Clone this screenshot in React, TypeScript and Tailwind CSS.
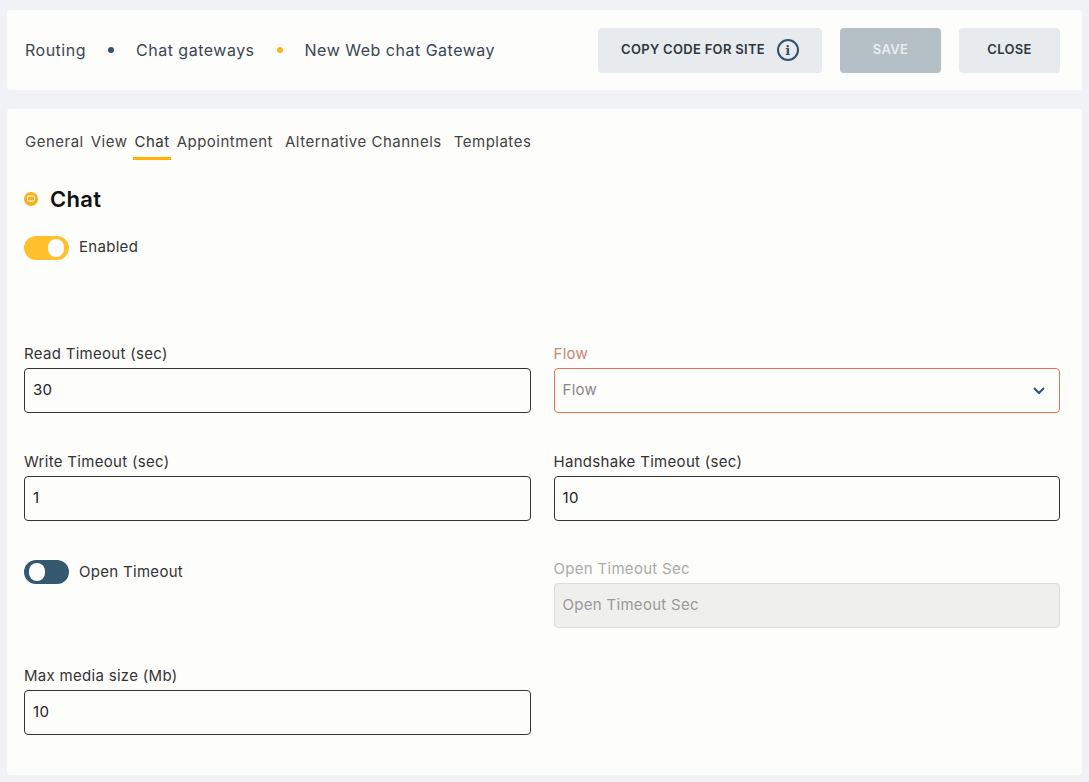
import React from "react";

function Field({ label, value, labelCls = "text-[#333]", boxCls = "border-[#333] text-[#222]", children }: any) {
  return (
    <div className="flex flex-col">
      <div className={`text-[15px] leading-[18px] mb-[5px] ${labelCls}`}>{label}</div>
      <div className={`h-[45px] border rounded-[4px] px-[8px] flex items-center text-[15px] ${boxCls}`}>
        {value}
        {children}
      </div>
    </div>
  );
}

export default function App() {
  return (
    <div className="w-[1089px] h-[782px] bg-[#f1f2f5] px-[7px] pt-[10px] text-[#333] tracking-[0.3px]" style={{ fontFamily: "Inter, 'Noto Sans', sans-serif" }}>
      <div className="h-[80px] bg-[#fdfdfc] rounded-[4px] flex items-center pl-[18px] pr-[22px]">
        <div className="flex items-center text-[16px] text-[#3a4654] flex-1 tracking-[0.5px]">
          <span>Routing</span>
          <span className="w-[6px] h-[6px] rounded-full bg-[#34506a] mx-[22px]" />
          <span>Chat gateways</span>
          <span className="w-[6px] h-[6px] rounded-full bg-[#fbb615] mx-[22px]" />
          <span>New Web chat Gateway</span>
        </div>
        <button className="h-[45px] w-[224px] bg-[#e7ebee] rounded-[4px] flex items-center justify-center gap-[12px] text-[13px] font-semibold text-[#2d3842]">
          COPY CODE FOR SITE
          <span className="w-[22px] h-[22px] rounded-full border-2 border-[#34506a] flex items-center justify-center text-[13px] font-bold text-[#34506a] leading-none" style={{ fontFamily: "'DejaVu Serif', serif" }}>i</span>
        </button>
        <button className="ml-[18px] h-[45px] w-[101px] bg-[#b4bfc6] rounded-[4px] text-[13px] font-semibold text-[#e9edf0]">SAVE</button>
        <button className="ml-[18px] h-[45px] w-[101px] bg-[#e7ebee] rounded-[4px] text-[13px] font-semibold text-[#2d3842]">CLOSE</button>
      </div>

      <div className="mt-[19px] h-[666px] bg-[#fdfdfc] rounded-[4px] pl-[17px] pr-[22px] pt-[22px]">
        <div className="flex text-[15px] text-[#444] gap-[7px] pl-[1px] tracking-[0.5px]">
          <span>General</span>
          <span>View</span>
          <span className="relative text-[#333]">
            Chat
            <span className="absolute left-[-1px] right-[-1px] top-[26px] h-[3px] bg-[#ffb300]" />
          </span>
          <span className="mr-[5px]">Appointment</span>
          <span className="mr-[5px]">Alternative Channels</span>
          <span>Templates</span>
        </div>

        <div className="flex items-center gap-[12px] mt-[29px]">
          <svg width="14" height="14" viewBox="0 0 14 14">
            <circle cx="7" cy="7" r="7" fill="#f5b21a" />
            <rect x="3.5" y="4" width="7" height="5" rx="1" fill="none" stroke="#fff" strokeWidth="1" />
            <path d="M6 9 L7 10.5 L8 9" fill="#fff" />
          </svg>
          <span className="text-[22px] font-semibold text-[#111]">Chat</span>
        </div>

        <div className="flex items-center gap-[10px] mt-[20px]">
          <div className="w-[45px] h-[24px] rounded-full bg-[#ffc02e] relative">
            <span className="absolute right-[5px] top-[3px] w-[16px] h-[18px] rounded-full bg-white" />
          </div>
          <span className="text-[15px] text-[#333]">Enabled</span>
        </div>

        <div className="grid grid-cols-2 gap-x-[23px] mt-[85px]">
          <Field label="Read Timeout (sec)" value="30" />
          <Field label="Flow" value="Flow" labelCls="text-[#c98a6f]" boxCls="border-[#e8734d] text-[#888]">
            <svg width="14" height="9" viewBox="0 0 14 9" className="ml-auto mr-[5px]">
              <path d="M2 2 L7 7 L12 2" fill="none" stroke="#34506a" strokeWidth="2" />
            </svg>
          </Field>
        </div>
        <div className="grid grid-cols-2 gap-x-[23px] mt-[40px]">
          <Field label="Write Timeout (sec)" value="1" />
          <Field label="Handshake Timeout (sec)" value="10" />
        </div>
        <div className="grid grid-cols-2 gap-x-[23px] mt-[39px]">
          <div className="flex items-start gap-[10px]">
            <div className="w-[45px] h-[24px] rounded-full bg-[#34586f] relative">
              <span className="absolute left-[5px] top-[3px] w-[16px] h-[18px] rounded-full bg-white" />
            </div>
            <span className="text-[15px] text-[#333] leading-[24px]">Open Timeout</span>
          </div>
          <Field label="Open Timeout Sec" value="Open Timeout Sec" labelCls="text-[#aaa]" boxCls="border-[#ddd] bg-[#efefee] text-[#999]" />
        </div>
        <div className="grid grid-cols-2 gap-x-[23px] mt-[39px]">
          <Field label="Max media size (Mb)" value="10" />
        </div>
      </div>
    </div>
  );
}
